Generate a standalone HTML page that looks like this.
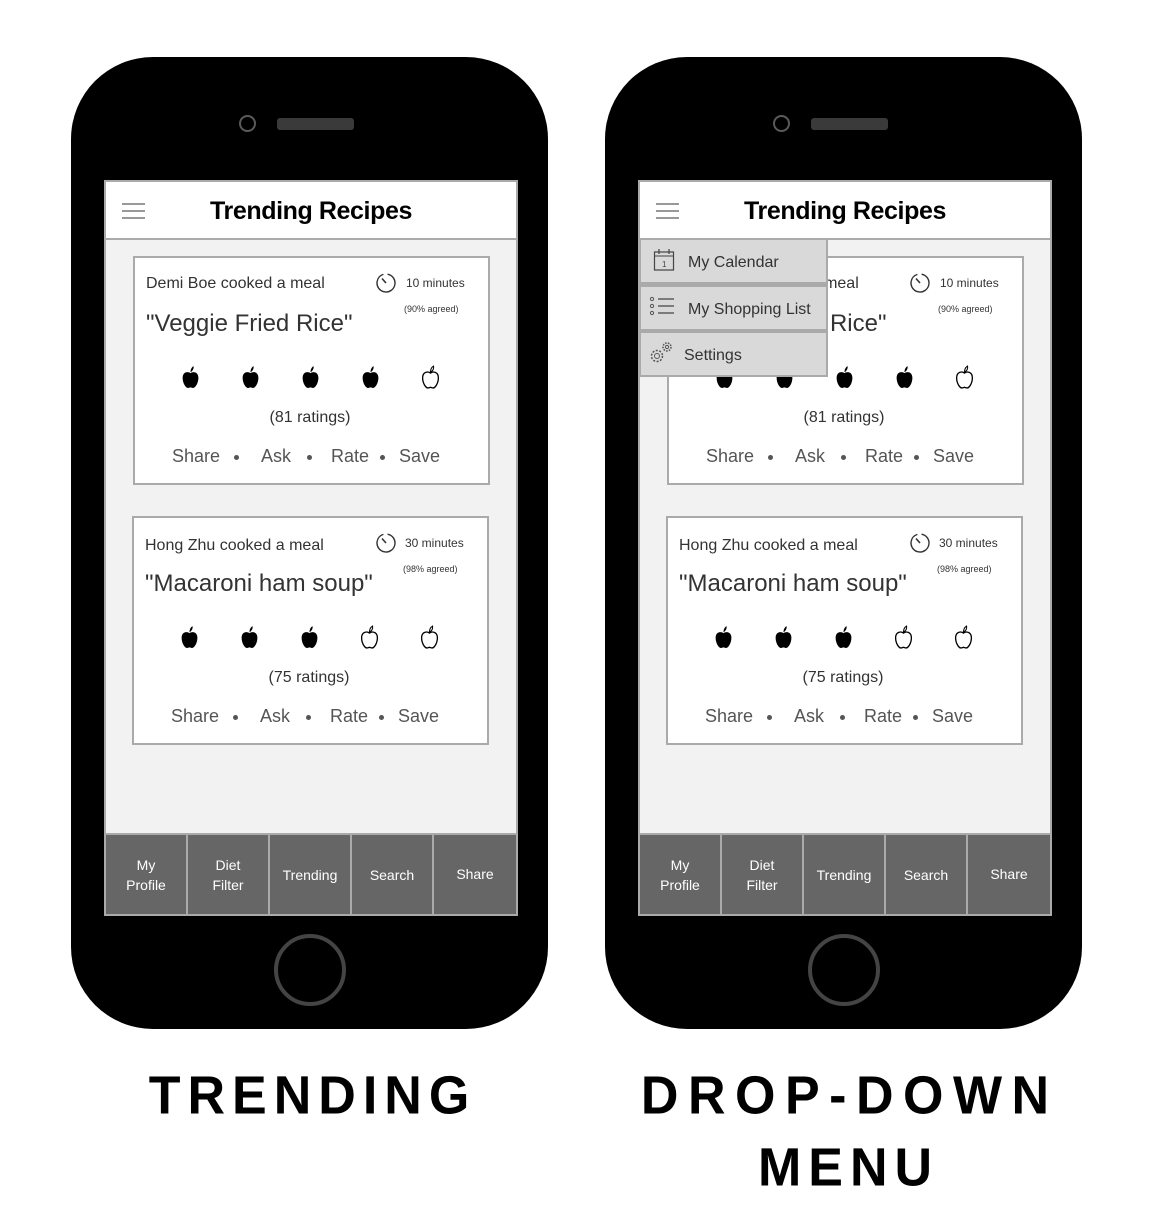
<!DOCTYPE html>
<html><head><meta charset="utf-8"><style>
*{margin:0;padding:0;box-sizing:border-box}
body{width:1152px;height:1224px;background:#fff;position:relative;overflow:hidden;font-family:"Liberation Sans",Arial,sans-serif}
.ph{position:absolute;top:0;width:1152px;height:1224px}
.a{position:absolute}
.body{left:71px;top:57px;width:477px;height:972px;background:#000;border-radius:82px}
.cam{left:239px;top:115px;width:17px;height:17px;border:2.5px solid #5a5a5a;border-radius:50%}
.spk{left:277px;top:118px;width:77px;height:12px;background:#3a3a3a;border-radius:3px}
.home{left:274px;top:934px;width:72px;height:72px;border:4px solid #444;border-radius:50%}
.scr{left:104px;top:180px;width:414px;height:736px;background:#f2f2f2;border:2px solid #aaa}
.hdr{left:104px;top:180px;width:414px;height:60px;background:#fff;border:2px solid #aaa}
.hb{left:122px;width:23px;height:2px;background:#999}
.title{left:104px;top:197px;width:414px;text-align:center;font-size:25px;font-weight:bold;color:#000;letter-spacing:-0.4px}
.card{width:357px;height:229px;background:#fff;border:2px solid #aaa}
.t{position:absolute;white-space:nowrap;color:#333}
.nav{top:833px;height:83px;background:#666;border:2px solid #aaa;color:#fff;font-size:14px;text-align:center;display:flex;align-items:center;justify-content:center;line-height:20px}
.dot{position:absolute;width:5px;height:5px;border-radius:50%;background:#555}
.lbl{position:absolute;font-weight:bold;font-size:52px;color:#000;text-align:center;white-space:nowrap;transform:scaleY(1.03);transform-origin:top}
.dd{left:639px;width:189px;height:46px;background:#d9d9d9;border:2px solid #aaa;font-size:16px;color:#333}
</style></head><body>
<svg width="0" height="0" style="position:absolute"><defs>
<symbol id="af" viewBox="0 0 24 28"><path d="M12 9.5C9.5 7.5 3 7.5 3 15C3 21 6.5 26.5 9 26.5C10.5 26.5 11 25.8 12 25.8C13 25.8 13.5 26.5 15 26.5C17.5 26.5 21 21 21 15C21 7.5 14.5 7.5 12 9.5Z" fill="#000"/><path d="M12 8.5C12 5.5 13 3 15.5 1.5C16 4.5 14.5 7 12 8.5Z" fill="#000"/></symbol>
<symbol id="ao" viewBox="0 0 24 28"><path d="M12 9.5C9.5 7.5 3 7.5 3 15C3 21 6.5 26.5 9 26.5C10.5 26.5 11 25.8 12 25.8C13 25.8 13.5 26.5 15 26.5C17.5 26.5 21 21 21 15C21 7.5 14.5 7.5 12 9.5Z" fill="none" stroke="#000" stroke-width="1.5"/><path d="M12 8.5C12 5.5 13 3 15.5 1.5C16 4.5 14.5 7 12 8.5Z" fill="none" stroke="#000" stroke-width="1.2"/></symbol>
<symbol id="tm" viewBox="0 0 22 22"><circle cx="11" cy="11" r="9" fill="none" stroke="#333" stroke-width="1.4" stroke-dasharray="52 5" transform="rotate(-80 11 11)"/><path d="M11 11L7 6.5" stroke="#333" stroke-width="1.6"/></symbol>
</defs></svg>

<div class="ph" id="p1">
<div class="a body"></div><div class="a cam"></div><div class="a spk"></div><div class="a home"></div>
<div class="a scr"></div>
<div class="a hdr"></div>
<div class="a hb" style="top:203px"></div><div class="a hb" style="top:210px"></div><div class="a hb" style="top:217px"></div>
<div class="a title">Trending Recipes</div>

<div class="a card" style="left:133px;top:256px"></div>
<div class="t" style="left:146px;top:275px;font-size:16px">Demi Boe cooked a meal</div>
<svg class="a" style="left:375px;top:272px" width="22" height="22"><use href="#tm"/></svg>
<div class="t" style="left:406px;top:276px;font-size:12px">10 minutes</div>
<div class="t" style="left:404px;top:304px;font-size:9px">(90% agreed)</div>
<div class="t" style="left:146px;top:310px;font-size:24px">"Veggie Fried Rice"</div>
<svg class="a" style="left:180px;top:364px" width="21" height="26"><use href="#af"/></svg>
<svg class="a" style="left:240px;top:364px" width="21" height="26"><use href="#af"/></svg>
<svg class="a" style="left:300px;top:364px" width="21" height="26"><use href="#af"/></svg>
<svg class="a" style="left:360px;top:364px" width="21" height="26"><use href="#af"/></svg>
<svg class="a" style="left:420px;top:364px" width="21" height="26"><use href="#ao"/></svg>
<div class="t" style="left:210px;width:200px;text-align:center;top:409px;font-size:16px">(81 ratings)</div>
<div class="t" style="left:172px;top:446px;font-size:18px;color:#555">Share</div><div class="dot" style="left:234px;top:455px"></div>
<div class="t" style="left:261px;top:446px;font-size:18px;color:#555">Ask</div><div class="dot" style="left:307px;top:455px"></div>
<div class="t" style="left:331px;top:446px;font-size:18px;color:#555">Rate</div><div class="dot" style="left:380px;top:455px"></div>
<div class="t" style="left:399px;top:446px;font-size:18px;color:#555">Save</div>

<div class="a card" style="left:132px;top:516px"></div>
<div class="t" style="left:145px;top:537px;font-size:16px">Hong Zhu cooked a meal</div>
<svg class="a" style="left:375px;top:532px" width="22" height="22"><use href="#tm"/></svg>
<div class="t" style="left:405px;top:536px;font-size:12px">30 minutes</div>
<div class="t" style="left:403px;top:564px;font-size:9px">(98% agreed)</div>
<div class="t" style="left:145px;top:570px;font-size:24px">"Macaroni ham soup"</div>
<svg class="a" style="left:179px;top:624px" width="21" height="26"><use href="#af"/></svg>
<svg class="a" style="left:239px;top:624px" width="21" height="26"><use href="#af"/></svg>
<svg class="a" style="left:299px;top:624px" width="21" height="26"><use href="#af"/></svg>
<svg class="a" style="left:359px;top:624px" width="21" height="26"><use href="#ao"/></svg>
<svg class="a" style="left:419px;top:624px" width="21" height="26"><use href="#ao"/></svg>
<div class="t" style="left:209px;width:200px;text-align:center;top:669px;font-size:16px">(75 ratings)</div>
<div class="t" style="left:171px;top:706px;font-size:18px;color:#555">Share</div><div class="dot" style="left:233px;top:715px"></div>
<div class="t" style="left:260px;top:706px;font-size:18px;color:#555">Ask</div><div class="dot" style="left:306px;top:715px"></div>
<div class="t" style="left:330px;top:706px;font-size:18px;color:#555">Rate</div><div class="dot" style="left:379px;top:715px"></div>
<div class="t" style="left:398px;top:706px;font-size:18px;color:#555">Save</div>

<div class="a nav" style="left:104px;width:84px">My<br>Profile</div>
<div class="a nav" style="left:186px;width:84px">Diet<br>Filter</div>
<div class="a nav" style="left:268px;width:84px">Trending</div>
<div class="a nav" style="left:350px;width:84px">Search</div>
<div class="a nav" style="left:432px;width:86px;padding-bottom:2px">Share</div>
</div>

<div class="ph" id="p2" style="left:534px"></div>

<div class="lbl" style="left:109px;width:400px;top:1065px;letter-spacing:7px;padding-left:7px">TRENDING</div>
<div class="lbl" style="left:595px;width:500px;top:1065px;letter-spacing:9.5px;padding-left:9.5px">DROP-DOWN</div>
<div class="lbl" style="left:645px;width:400px;top:1137px;letter-spacing:7px;padding-left:7px">MENU</div>

<div class="a" style="left:639px;top:238px;width:189px;height:139px;background:#aaa"></div>
<div class="a dd" style="top:238px"><svg class="a" style="left:12px;top:8px" width="22" height="24" viewBox="0 0 22 24"><rect x="1.5" y="4" width="19" height="18" fill="none" stroke="#444" stroke-width="1.2"/><line x1="1.5" y1="8" x2="20.5" y2="8" stroke="#444"/><line x1="6" y1="1" x2="6" y2="6" stroke="#444" stroke-width="1.2"/><line x1="16" y1="1" x2="16" y2="6" stroke="#444" stroke-width="1.2"/><text x="9" y="19" font-size="8" fill="#444" font-family="Liberation Sans">1</text></svg><span class="t" style="left:47px;top:14px">My Calendar</span></div>
<div class="a dd" style="top:285px;height:46px"><svg class="a" style="left:8px;top:8px" width="26" height="26" viewBox="0 0 26 26"><circle cx="3" cy="4" r="1.6" fill="none" stroke="#555"/><circle cx="3" cy="11" r="1.6" fill="none" stroke="#555"/><circle cx="3" cy="18" r="1.6" fill="none" stroke="#555"/><path d="M9 4H25M9 11H25M9 18H25" stroke="#444" stroke-width="1.2"/></svg><span class="t" style="left:47px;top:14px">My Shopping List</span></div>
<div class="a dd" style="top:331px;height:46px"><svg class="a" style="left:7px;top:7px" width="26" height="26" viewBox="0 0 26 26"><circle cx="9" cy="16" r="5.5" fill="none" stroke="#555" stroke-width="1.5" stroke-dasharray="2 1.5"/><circle cx="9" cy="16" r="2.5" fill="none" stroke="#555"/><circle cx="19" cy="7" r="4" fill="none" stroke="#555" stroke-width="1.5" stroke-dasharray="1.6 1.2"/><circle cx="19" cy="7" r="1.6" fill="none" stroke="#555"/></svg><span class="t" style="left:43px;top:14px">Settings</span></div>

<script>
var p1=document.getElementById('p1'),p2=document.getElementById('p2');
p2.innerHTML=p1.innerHTML;
</script>
</body></html>
